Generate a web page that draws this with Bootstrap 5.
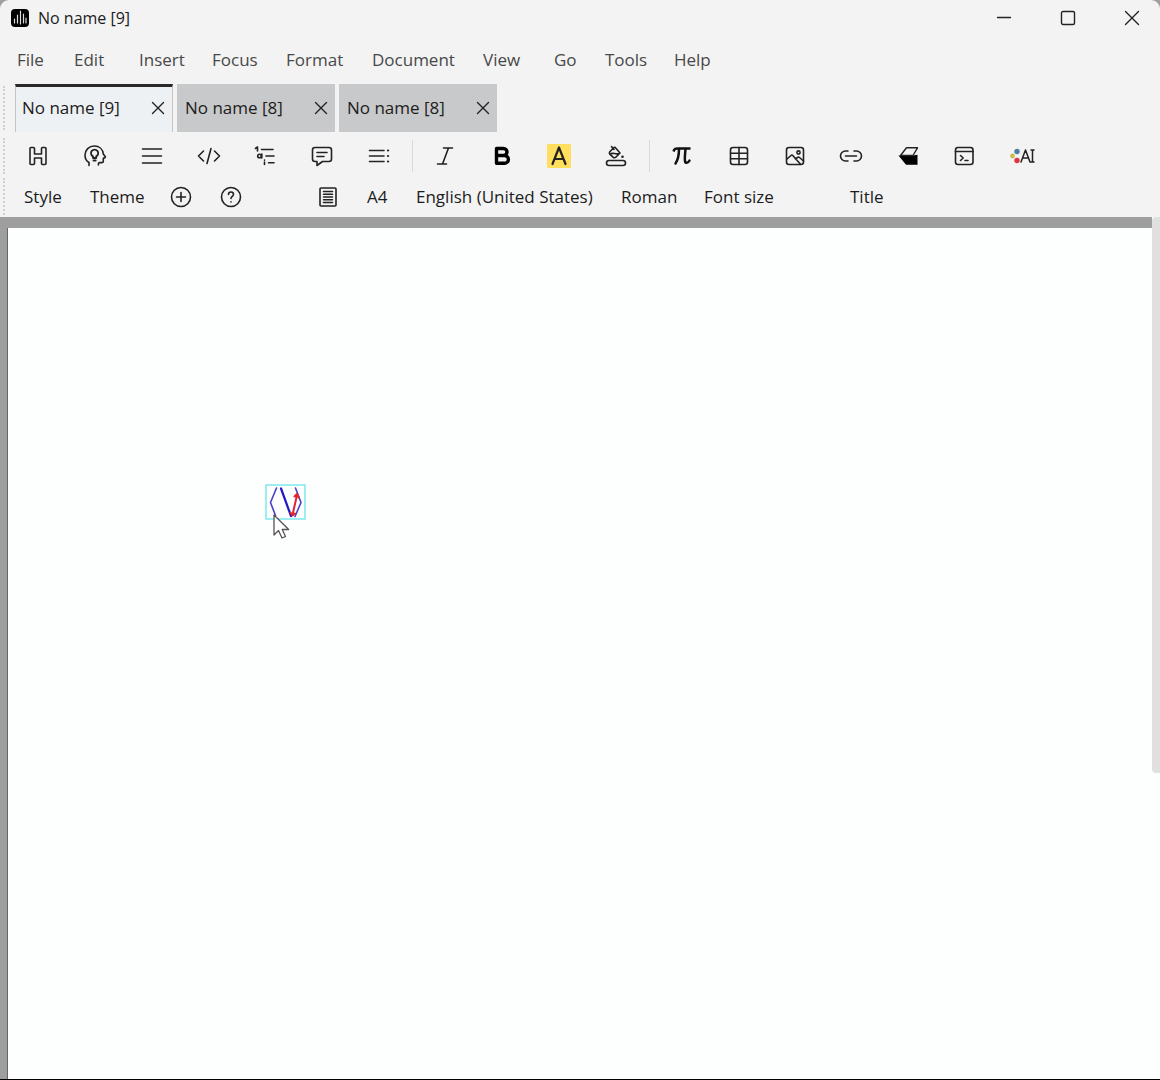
<!DOCTYPE html>
<html lang="en">
<head>
<meta charset="utf-8">
<meta name="viewport" content="width=device-width, initial-scale=1">
<title>No name [9]</title>
<link href="https://cdn.jsdelivr.net/npm/bootstrap@5.3.0/dist/css/bootstrap.min.css" rel="stylesheet">
<style>
  body { font-family: "Open Sans", "Noto Sans", sans-serif; font-size: 17px; line-height: 24px; background: #a0a0a0; color: #1c1c1c; }
  svg { display: block; fill: none; stroke: #222; stroke-width: 1.6; stroke-linecap: round; stroke-linejoin: round; }
  button { border: 0; background: none; padding: 0; color: inherit; }
  .app-window { background: #f3f3f3; border-bottom: 1px solid #000; border-radius: 9px 9px 0 0; }
  .title-bar { height: 36px; padding-left: 10px; font-size: 16px; }
  .win-btn { width: 56px; height: 36px; }
  .menu-bar { display: grid; grid-template-columns: 57px 65px 73px 74px 86px 111px 71px 51px 69px 60px; height: 48px; padding-left: 17px; align-items: center; }
  .menu-bar a { color: #484848; text-decoration: none; }
  .strip { padding-left: 10px; position: relative; }
  .strip::before { content: ""; position: absolute; left: 3px; top: 2px; bottom: 2px; border-left: 2px dotted #cfcfcf; }
  .doc-tabs { height: 48px; padding-left: 15px; gap: 4px; }
  .doc-tab { width: 158px; padding: 0 6px 0 8px; background: #c8c9ca; }
  .doc-tab.current { background: #edf1f3; border: solid #c4c4c4; border-width: 0 1px; border-top: 3px solid #2a2828; padding-left: 6px; padding-bottom: 3px; }
  .icon-bar { height: 40px; margin-top: 4px; }
  .seven { width: 397px; }
  .four { width: 227px; }
  .rule { width: 10px; height: 32px; }
  .rule::before { content: ""; display: block; width: 1px; height: 100%; margin: 0 auto; background: #dadada; }
  .style-bar { height: 41px; }
  .style-items { display: grid; grid-template-columns: 66px 80px 50px 98px 49px 49px 205px 83px 146px 60px; padding-left: 14px; }
  .style-items button { text-align: left; white-space: nowrap; }
  .work { min-height: 0; background: #fdfefe; }
  .desk { background: #9e9e9e; padding: 11px 0 0 7px; }
  .sheet { background: #fdfefe; border-left: 1px solid #666; }
  .track { width: 8px; background: #fdfefe; }
  .thumb { height: 556px; max-height: 65%; background: #e0e0e0; border-radius: 4px 0 0 4px; }
  .formula { left: 257px; top: 256px; }
  .pointer { left: 264px; top: 285px; }
</style>
<script src="https://cdn.jsdelivr.net/npm/bootstrap@5.3.0/dist/js/bootstrap.bundle.min.js"></script>
</head>
<body>
<div class="app-window vh-100 d-flex flex-column overflow-hidden">
  <header class="title-bar d-flex align-items-center flex-shrink-0 gap-2">
    <svg width="20" height="20" viewBox="0 0 20 20"><rect x="1" y="1" width="18" height="18" rx="4" fill="#000" stroke="none"/><path d="M4.500 11v4M7.500 7v8M10.500 3v13M13.500 6v9M16 10v5" stroke="#ddd" stroke-width="1.200"/></svg>
    <span class="me-auto">No name [9]</span>
    <button class="win-btn d-flex justify-content-center align-items-center" aria-label="Minimize"><svg width="16" height="16" viewBox="0 0 16 16"><path d="M1.500 7.500h13" stroke-width="1.300"/></svg></button>
    <button class="win-btn d-flex justify-content-center align-items-center" aria-label="Maximize"><svg width="16" height="16" viewBox="0 0 16 16"><rect x="1.500" y="1.500" width="13" height="13" rx="1.500" stroke-width="1.400"/></svg></button>
    <button class="win-btn d-flex justify-content-center align-items-center" aria-label="Close"><svg width="16" height="16" viewBox="0 0 16 16"><path d="M1.500 1.500l13 13M14.500 1.500l-13 13" stroke-width="1.400"/></svg></button>
  </header>
  <nav class="menu-bar flex-shrink-0" aria-label="Menu">
    <a href="#">File</a><a href="#">Edit</a><a href="#">Insert</a><a href="#">Focus</a><a href="#">Format</a><a href="#">Document</a><a href="#">View</a><a href="#">Go</a><a href="#">Tools</a><a href="#">Help</a>
  </nav>
  <div class="strip doc-tabs d-flex flex-shrink-0">
    <div class="doc-tab current d-flex align-items-center justify-content-between"><button>No name [9]</button><button aria-label="Close tab"><svg width="16" height="16" viewBox="0 0 16 16"><path d="M2.500 2.500l11 11M13.500 2.500l-11 11" stroke-width="1.400"/></svg></button></div>
    <div class="doc-tab d-flex align-items-center justify-content-between"><button>No name [8]</button><button aria-label="Close tab"><svg width="16" height="16" viewBox="0 0 16 16"><path d="M2.500 2.500l11 11M13.500 2.500l-11 11" stroke-width="1.400"/></svg></button></div>
    <div class="doc-tab d-flex align-items-center justify-content-between"><button>No name [8]</button><button aria-label="Close tab"><svg width="16" height="16" viewBox="0 0 16 16"><path d="M2.500 2.500l11 11M13.500 2.500l-11 11" stroke-width="1.400"/></svg></button></div>
  </div>
  <div class="strip icon-bar d-flex align-items-center flex-shrink-0">
    <div class="seven d-flex">
      <button class="flex-fill d-flex justify-content-center" aria-label="Heading"><svg width="24" height="24" viewBox="0 0 24 24"><path d="M5 3.500h2.500q1 0 1 1V10h7V4.500q0-1 1-1H19q1 0 1 1v15q0 1-1 1h-2.500q-1 0-1-1V14h-7v5.500q0 1-1 1H5q-1 0-1-1v-15q0-1 1-1z"/></svg></button>
      <button class="flex-fill d-flex justify-content-center" aria-label="Idea"><svg width="24" height="24" viewBox="0 0 24 24"><path d="M6 21.500v-3C3.500 17 2 14.500 2 11.200 2 6 6 2 11.300 2c5 0 8.500 3.300 9 8l2 2.700q.3.800-.8 1.200l-1.200.3v2.700q0 1.700-1.800 1.700h-1.800q-1.300 0-1.300 1.300v1"/><path d="M10 14v-1.600a3.600 3.600 0 1 1 3.200 0V14zM10.500 16.500h2.200" stroke-width="1.800"/></svg></button>
      <button class="flex-fill d-flex justify-content-center" aria-label="Paragraph"><svg width="24" height="24" viewBox="0 0 24 24"><path d="M2.500 5h19M2.500 12h19M2.500 19h19"/></svg></button>
      <button class="flex-fill d-flex justify-content-center" aria-label="Code"><svg width="24" height="24" viewBox="0 0 24 24"><path d="M6.500 7L1.500 12l5 5M17.500 7l5 5-5 5M14 4.500l-4 15"/></svg></button>
      <button class="flex-fill d-flex justify-content-center" aria-label="Outline"><svg width="24" height="24" viewBox="0 0 24 24"><path d="M2.500 4.500L4.500 3v4M8.500 5.500H20M13 12h8M15.500 18.800H21"/><circle cx="6.500" cy="12" r="1.800"/><path d="M8.800 10v4M11.500 18v2.500M11.500 16v.2"/></svg></button>
      <button class="flex-fill d-flex justify-content-center" aria-label="Comment"><svg width="24" height="24" viewBox="0 0 24 24"><path d="M5 3.500h14q2.500 0 2.500 2.500v9q0 2.500-2.500 2.500h-6.500L7 21.500v-4H5q-2.500 0-2.500-2.500V6q0-2.500 2.500-2.500zM7 8.500h10M7 12.500h7"/></svg></button>
      <button class="flex-fill d-flex justify-content-center" aria-label="List"><svg width="24" height="24" viewBox="0 0 24 24"><path d="M2.500 6.500h14.500M2.500 12h14.500M2.500 17.500h14.500"/><path d="M21 6.500h.1M21 12h.1M21 17.500h.1" stroke-width="2.200"/></svg></button>
    </div>
    <div class="rule"></div>
    <div class="four d-flex">
      <button class="flex-fill d-flex justify-content-center" aria-label="Italic"><svg width="24" height="24" viewBox="0 0 24 24"><path d="M10.500 4h9M4.500 20h9M15.500 4l-6 16"/></svg></button>
      <button class="flex-fill d-flex justify-content-center" aria-label="Bold"><svg width="24" height="24" viewBox="0 0 24 24"><path d="M6.500 4.500h7a3.500 3.500 0 0 1 0 7h-7zM6.500 11.500h8a3.800 3.800 0 0 1 0 7.800h-8z" stroke="#000" stroke-width="3.400"/></svg></button>
      <button class="flex-fill d-flex justify-content-center" aria-label="Highlight"><svg width="24" height="24" viewBox="0 0 24 24"><rect width="24" height="24" rx="1" fill="#ffdf5d" stroke="none"/><path d="M5.500 20L12 3.500 18.500 20M7.500 15h9" stroke-width="2.200"/></svg></button>
      <button class="flex-fill d-flex justify-content-center" aria-label="Fill color"><svg width="24" height="24" viewBox="0 0 24 24"><rect x="2.500" y="16.500" width="19" height="5" rx="2.500"/><path d="M10 3.500L5.800 7.800q-1 1.200 0 2.300l3.200 3q1.400 1.200 2.800.1l4.200-4.200-4.300-5q-.9-1.200-1.700-.5zM7.500 2.500l2.500 3M6 10.200c3-2.500 5.500 1 9.500-.8"/><circle cx="18.500" cy="12.800" r="1.300" fill="#222" stroke="none"/></svg></button>
    </div>
    <div class="rule"></div>
    <div class="seven d-flex">
      <button class="flex-fill d-flex justify-content-center" aria-label="Formula"><svg width="24" height="24" viewBox="0 0 24 24"><path d="M3.500 7.500C4.500 4.500 5.500 4.500 8 4.500h12.500" stroke="#111" stroke-width="2.600" stroke-linecap="butt"/><path d="M9 5c0 6-.5 10-3.500 14.500M15.500 5c-.5 6-1 9-.5 12 .3 2.500 3 2.500 4.500-.5" stroke="#111" stroke-width="2.500"/></svg></button>
      <button class="flex-fill d-flex justify-content-center" aria-label="Table"><svg width="24" height="24" viewBox="0 0 24 24"><rect x="3.500" y="3.500" width="17" height="17" rx="2.500"/><path d="M3.500 9.200h17M3.500 14.800h17M12 3.500v17"/></svg></button>
      <button class="flex-fill d-flex justify-content-center" aria-label="Image"><svg width="24" height="24" viewBox="0 0 24 24"><rect x="3.500" y="3.500" width="17" height="17" rx="2.500"/><circle cx="15.500" cy="8.500" r="1.600"/><path d="M4 15l4-3.500q1-.8 2 .2l7.500 8.500M12.500 15l2-1.500q1-.8 2 0l4 3.500"/></svg></button>
      <button class="flex-fill d-flex justify-content-center" aria-label="Link"><svg width="24" height="24" viewBox="0 0 24 24"><path d="M9 7H6.500a5 5 0 0 0 0 10H9M15 7h2.500a5 5 0 0 1 0 10H15M6.500 12h11"/></svg></button>
      <button class="flex-fill d-flex justify-content-center" aria-label="Eraser"><svg width="24" height="24" viewBox="0 0 24 24"><path d="M2.500 11.500H17l4.500-.8v10H10z" fill="#000" stroke="none"/><path d="M10.500 3.800h11L17 11.500H4.500z" fill="#f3f3f3" stroke-width="1.400"/></svg></button>
      <button class="flex-fill d-flex justify-content-center" aria-label="Terminal"><svg width="24" height="24" viewBox="0 0 24 24"><rect x="3.500" y="3.500" width="17.500" height="17" rx="2.500"/><path d="M3.500 7.500h17.500M8.500 11.500l2.700 2.500-2.700 2.500M13 16.500h3"/></svg></button>
      <button class="flex-fill d-flex justify-content-center" aria-label="AI"><svg width="26" height="24" viewBox="0 0 26 24"><g stroke="none"><circle cx="3.500" cy="12" r="2.400" fill="#c9bd52"/><circle cx="8" cy="7.500" r="2.700" fill="#4d7fa8"/><circle cx="8" cy="16.500" r="2.700" fill="#df3540"/></g><path d="M12 18l4.500-12L21 18M13.500 14h6M22 6h3M22 18h3M23.500 6v12" stroke-width="1.500"/></svg></button>
    </div>
  </div>
  <div class="strip style-bar d-flex align-items-center flex-shrink-0">
    <div class="style-items align-items-center">
      <button>Style</button><button>Theme</button>
      <button aria-label="Add"><svg width="22" height="22" viewBox="0 0 22 22"><circle cx="11" cy="11" r="9.500"/><path d="M11 6.500v9M6.500 11h9"/></svg></button>
      <button aria-label="Help"><svg width="22" height="22" viewBox="0 0 22 22"><circle cx="11" cy="11" r="9.500"/><path d="M8.500 8.500c0-3.400 5-3.200 5-.2 0 2-2.500 2-2.500 4.200M11 15.800v.2"/></svg></button>
      <button aria-label="Page"><svg width="20" height="22" viewBox="0 0 20 22"><rect x="2" y="2" width="16" height="18" rx="1"/><path d="M5.500 5.500h9M5.500 8.300h9M5.500 11h9M5.500 13.800h9M5.500 16.500h9" stroke-width="1.500"/></svg></button>
      <button>A4</button><button>English (United States)</button><button>Roman</button><button>Font size</button><button>Title</button>
    </div>
  </div>
  <main class="work d-flex flex-grow-1">
    <div class="desk d-flex flex-grow-1">
      <div class="sheet flex-grow-1 position-relative">
        <svg class="formula position-absolute" width="42" height="37" viewBox="0 0 42 37"><rect x="1" y="1" width="39" height="34" stroke="#7de8ee" stroke-width="1.500"/><path d="M11.500 4L5.500 18.500l5 13M30.500 4l5.500 14.500-6 14" stroke="#4a3fc8"/><path d="M16 4.500L26 32" stroke="#2418c4" stroke-width="2.200"/><path d="M27.500 31L32 11M29.500 12.500L32 10l1.800 3.500M25.500 28.500l2 3 2.500-2" stroke="#e0262e" stroke-width="2"/></svg>
        <svg class="pointer position-absolute" width="22" height="28" viewBox="0 0 22 28"><path d="M2 2v20l4.500-4.500 3.500 7.500 3.500-1.500-3.300-7h6.500z" fill="#fff" stroke="#555" stroke-width="1.300"/></svg>
      </div>
    </div>
    <div class="track"><div class="thumb"></div></div>
  </main>
</div>
</body>
</html>
